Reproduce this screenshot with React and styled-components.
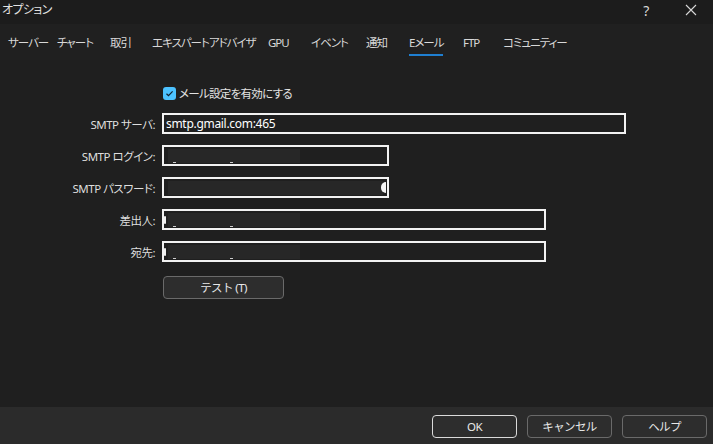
import React from 'react';
import styled, { createGlobalStyle } from 'styled-components';

const GlobalStyle = createGlobalStyle`
  html, body { margin: 0; padding: 0; background: #1f1f1f; }
  body {
    font-family: "Noto Sans", "Noto Sans CJK JP", sans-serif;
    font-feature-settings: "palt";
    color: #e2e2e2;
  }
`;

const Window = styled.div`
  width: 713px;
  height: 444px;
  display: flex;
  flex-direction: column;
  background: #1f1f1f;
  overflow: hidden;
`;

const TitleBar = styled.div`
  height: 24px;
  display: flex;
  align-items: center;
  background: #1c1c1c;
  padding-left: 2px;
  font-size: 12px;
  letter-spacing: -0.6px;
`;

const Title = styled.div`
  flex: 1;
  margin-top: -6px;
`;

const TitleButton = styled.div`
  width: ${p => p.$w}px;
  display: flex;
  justify-content: center;
  align-items: center;
  font-size: 14px;
  color: #d8d8d8;
  margin-top: -4px;
`;

const TabBar = styled.div`
  height: 36px;
  display: flex;
  align-items: stretch;
  padding-left: 8px;
  background: #202020;
`;

const Tab = styled.div`
  position: relative;
  display: flex;
  align-items: center;
  width: ${p => p.$w}px;
  white-space: nowrap;
  font-size: 11.5px;
  letter-spacing: -1px;
  color: #d8d8d8;
`;

const TabText = styled.span`
  position: relative;
  &::after {
    content: '';
    display: ${p => (p.$active ? 'block' : 'none')};
    position: absolute;
    left: 0;
    right: 1px;
    bottom: -6px;
    height: 2px;
    background: #1f7fd1;
  }
`;

const Content = styled.div`
  flex: 1;
  padding-top: 26px;
`;

const Form = styled.div`
  display: grid;
  grid-template-columns: 156px auto;
  column-gap: 6px;
  row-gap: 11px;
  align-items: center;
`;

const Label = styled.div`
  text-align: right;
  font-size: 11.5px;
  letter-spacing: -0.5px;
  color: #dedede;
  padding-right: 1px;
`;

const CheckRow = styled.label`
  grid-column: 2;
  display: flex;
  align-items: center;
  gap: 3px;
  font-size: 11.5px;
  letter-spacing: -0.7px;
  height: 14px;
  margin-left: 1px;
  margin-bottom: 2px;
`;

const Box = styled.span`
  width: 13px;
  height: 13px;
  border-radius: 3px;
  background: #4cc2ff;
  display: flex;
  align-items: center;
  justify-content: center;
`;

const Field = styled.div`
  position: relative;
  box-sizing: border-box;
  width: ${p => p.$w}px;
  height: 21px;
  border: 2px solid #f2f2f2;
  background: #1f1f1f;
  display: flex;
  align-items: center;
  padding-left: 2px;
  font-size: 12px;
  letter-spacing: -0.3px;
  color: #ffffff;
`;

const Masked = styled.div`
  position: relative;
  height: 14px;
  width: ${p => p.$w}px;
  background: #272727;
  margin-left: 2px;
`;

const Tick = styled.span`
  position: absolute;
  bottom: 0;
  left: ${p => p.$x}px;
  width: 3px;
  height: 1px;
  background: #cfcfcf;
`;

const Caret = styled.span`
  position: absolute;
  left: 0;
  top: 5px;
  width: 2px;
  height: 8px;
  border-radius: 1px;
  background: #f0f0f0;
`;

const Reveal = styled.span`
  position: absolute;
  right: 1px;
  top: 3px;
  width: 5px;
  height: 11px;
  border-radius: 6px 0 0 6px;
  background: #f4f4f4;
`;

const Button = styled.button`
  box-sizing: border-box;
  width: ${p => p.$w}px;
  height: 23px;
  border-radius: 4px;
  border: 1px solid ${p => (p.$primary ? '#dadada' : '#6a6a6a')};
  background: #2d2d2d;
  color: #e8e8e8;
  font-family: inherit;
  font-size: 11.5px;
  letter-spacing: -0.6px;
  padding: 0;
`;

const TestCell = styled.div`
  grid-column: 2;
  margin-top: 2px;
  margin-left: 1px;
`;

const Footer = styled.div`
  height: 37px;
  background: #2b2b2b;
  display: flex;
  align-items: center;
  justify-content: flex-end;
  gap: 10px;
  padding-right: 6px;
  padding-top: 1px;
  box-sizing: border-box;
`;

const tabs = [
  ['サーバー', 49],
  ['チャート', 53],
  ['取引', 42],
  ['エキスパートアドバイザ', 116],
  ['GPU', 43],
  ['イベント', 55],
  ['通知', 43],
  ['Eメール', 54],
  ['FTP', 40],
  ['コミュニティー', 80],
];

function Hidden({ w = 132, caret }) {
  return (
    <>
      {caret && <Caret />}
      <Masked $w={w}>
        <Tick $x={5} />
        <Tick $x={62} />
      </Masked>
    </>
  );
}

export default function App() {
  return (
    <Window>
      <GlobalStyle />
      <TitleBar>
        <Title>オプション</Title>
        <TitleButton $w={46}>?</TitleButton>
        <TitleButton $w={44}>
          <svg width="12" height="12" viewBox="0 0 12 12">
            <path d="M1 1L11 11M11 1L1 11" stroke="#d8d8d8" strokeWidth="1.1" />
          </svg>
        </TitleButton>
      </TitleBar>
      <TabBar>
        {tabs.map(([t, w]) => (
          <Tab key={t} $w={w}>
            <TabText $active={t === 'Eメール'}>{t}</TabText>
          </Tab>
        ))}
      </TabBar>
      <Content>
        <Form>
          <CheckRow>
            <Box>
              <svg width="9" height="9" viewBox="0 0 9 9">
                <path d="M1.5 4.8L3.5 6.7L7.6 2.3" fill="none" stroke="#102030" strokeWidth="1.2" />
              </svg>
            </Box>
            メール設定を有効にする
          </CheckRow>

          <Label>SMTP サーバ:</Label>
          <Field $w={464}>smtp.gmail.com:465</Field>

          <Label>SMTP ログイン:</Label>
          <Field $w={227}><Hidden /></Field>

          <Label>SMTP パスワード:</Label>
          <Field $w={227}>
            <Masked $w={215} />
            <Reveal />
          </Field>

          <Label>差出人:</Label>
          <Field $w={384}><Hidden caret /></Field>

          <Label>宛先:</Label>
          <Field $w={384}><Hidden caret /></Field>

          <TestCell>
            <Button $w={121}>テスト (T)</Button>
          </TestCell>
        </Form>
      </Content>
      <Footer>
        <Button $w={85} $primary>OK</Button>
        <Button $w={85}>キャンセル</Button>
        <Button $w={85}>ヘルプ</Button>
      </Footer>
    </Window>
  );
}
